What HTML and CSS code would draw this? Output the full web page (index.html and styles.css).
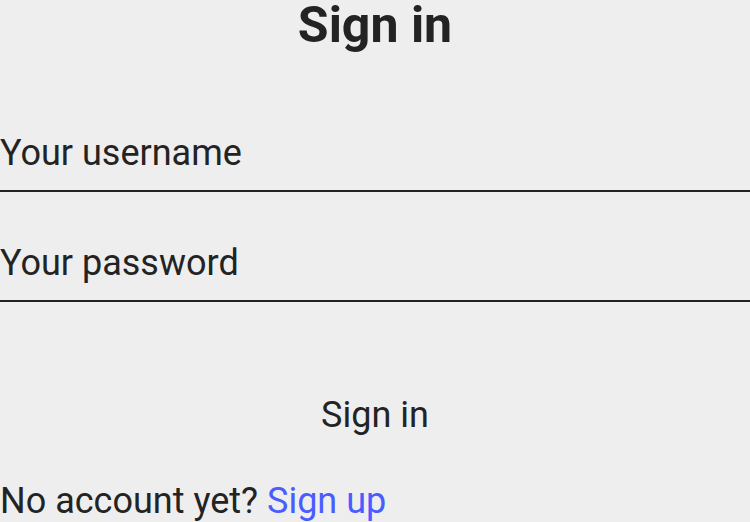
FILE: index.html
```html
<!DOCTYPE html>
<html lang="en">
<head>
<meta charset="utf-8">
<title>Sign in</title>
<link rel="stylesheet" href="styles.css">
</head>
<body>
<main class="page">
  <h1 class="title">Sign in</h1>
  <form class="form">
    <input class="field" type="text" placeholder="Your username">
    <input class="field" type="password" placeholder="Your password">
    <button class="submit" type="button">Sign in</button>
  </form>
  <p class="footer">No account yet? <a class="link" href="#">Sign up</a></p>
</main>
</body>
</html>
```
FILE: styles.css
```css
html, body {
  margin: 0;
  padding: 0;
  background: #eeeeee;
}
body {
  font-family: Roboto, "Noto Sans", sans-serif;
  color: #232323;
}
.page {
  display: flex;
  flex-direction: column;
}
.title {
  margin: 0;
  font-size: 50px;
  font-weight: 700;
  text-align: center;
  line-height: 50px;
}
.form {
  display: flex;
  flex-direction: column;
  margin-top: 82px;
}
.field {
  font-family: inherit;
  font-size: 36px;
  line-height: 42px;
  height: 60px;
  box-sizing: border-box;
  color: #232323;
  background: transparent;
  border: none;
  border-bottom: 2px solid #232323;
  padding: 0 0 16px 0;
  margin: 0 0 50px 0;
  outline: none;
}
.field::placeholder {
  color: #232323;
  opacity: 1;
}
.submit {
  font-family: inherit;
  font-size: 36px;
  line-height: 42px;
  color: #232323;
  background: transparent;
  border: none;
  padding: 0;
  margin: 42px 0 0 0;
  align-self: center;
}
.footer {
  margin: 44px 0 0 0;
  font-size: 36px;
  line-height: 42px;
}
.link {
  color: #4a5cff;
  text-decoration: none;
}
```
